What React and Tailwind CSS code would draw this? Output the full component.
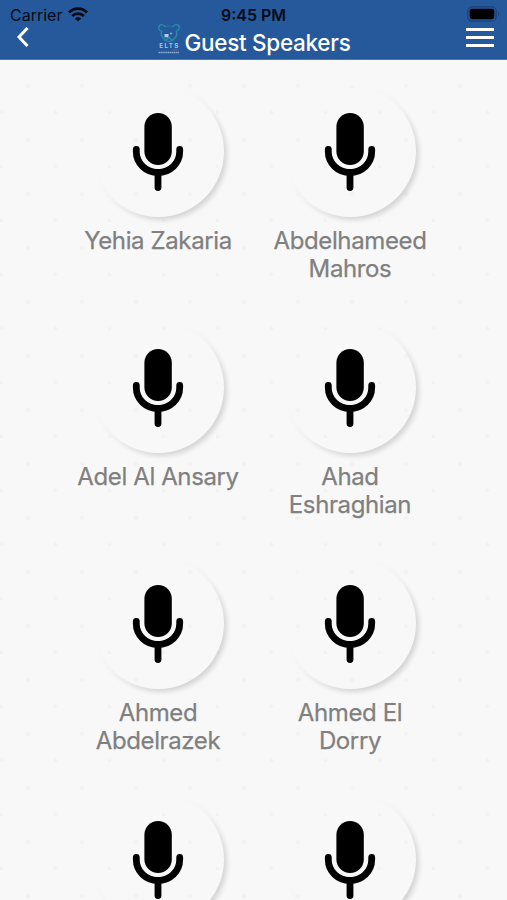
const speakers = [
    { id: 1, lines: ['Yehia Zakaria'] },
    { id: 2, lines: ['Abdelhameed', 'Mahros'] },
    { id: 3, lines: ['Adel Al Ansary'] },
    { id: 4, lines: ['Ahad', 'Eshraghian'] },
    { id: 5, lines: ['Ahmed', 'Abdelrazek'] },
    { id: 6, lines: ['Ahmed El', 'Dorry'] },
    { id: 7, lines: [] },
    { id: 8, lines: [] },
]

const WifiIcon = () => (
    <svg className="ml-[6px] mt-[7px] h-[15px] w-[20px]" viewBox="0 0 20 15" fill="none" stroke="#050b16">
        <path d="M1 5.4C6 .3 14 .3 19 5.4" strokeWidth="2.8" />
        <path d="M4.1 9c3.3-3.3 8.5-3.3 11.8 0" strokeWidth="2.7" />
        <path d="M10 14.6 6.8 11.4c1.8-1.7 4.6-1.7 6.4 0Z" fill="#050b16" stroke="none" />
    </svg>
)

const BatteryIcon = () => (
    <svg className="h-[17px] w-[33px]" viewBox="0 0 33 17" fill="none">
        <rect x=".8" y=".8" width="28.4" height="14.4" rx="4.5" stroke="#1c4277" strokeWidth="1.2" />
        <rect x="2.7" y="2.8" width="24.6" height="10.4" rx="2.4" fill="#000" />
        <path d="M31 5.7c1.5.8 1.5 3.8 0 4.6Z" fill="#1c4277" />
    </svg>
)

const Logo = () => (
    <svg className="h-[32px] w-[24px]" viewBox="0 0 24 32" fill="none">
        <g stroke="#2a9caa" strokeWidth="1.4" opacity=".8">
            <path d="M3.5 8C.4 5.5 1.5 1.6 4.8 1.6c1.6 0 2.7 1 3.2 2.3M20.5 8c3.1-2.5 2-6.4-1.3-6.4-1.6 0-2.7 1-3.2 2.3" />
            <path d="M4.8 7.5c-1.3 3.5.2 7 3 9M19.2 7.5c1.3 3.5-.2 7-3 9" />
            <path d="M7 16.5c2.5 2.5 7.5 2.5 10 0M8.5 17.500l3.500-3 3.500 3" />
            <path d="M8 3.900c2.500-1 5.500-1 8 0" opacity=".5" />
        </g>
        <path d="M7.5 11h4v3.3h-4z" fill="#b7cfea" />
        <circle cx="14" cy="10.5" r="1.1" fill="#78b7cf" />
        <text x="2.3" y="25" fill="#a9c5e6" fontSize="6.2" fontWeight="700" textLength="19" fontFamily="Inter, sans-serif">ELTS</text>
        <path d="M15.5 27h5.5" stroke="#a05476" strokeWidth=".8" />
        <path d="M1.5 29.5h21" stroke="#a9c5e6" strokeWidth="1.4" strokeDasharray="1.5 .4" opacity=".75" />
    </svg>
)

const Microphone = () => (
    <svg className="h-[80px] w-[52px]" viewBox="0 0 52 80" fill="none" stroke="#000">
        <rect x="12.4" y="1" width="27.4" height="52" rx="13.7" fill="#000" stroke="none" />
        <path d="M4.3 37.3v2.5a21.7 20.8 0 0 0 43.4 0v-2.5M26 60.5v15" strokeWidth="6.8" strokeLinecap="round" />
    </svg>
)

const Speaker = ({ lines }) => (
    <div className="flex h-[236px] w-[192px] flex-col items-center">
        <div className="flex h-[131px] w-[131px] shrink-0 items-center justify-center rounded-full shadow-[-5px_-5px_4px_2px_#f8f8f8,3px_3px_5px_rgba(0,0,0,0.14)]">
            <Microphone />
        </div>
        <p className="mt-[10px] text-center text-[24px] leading-[28px] tracking-[-0.38px] text-[#808080] [-webkit-text-stroke:0.25px_#808080]">
            {lines.map(line => (
                <span key={line} className="block whitespace-nowrap">{line}</span>
            ))}
        </p>
    </div>
)

const Header = () => (
    <header className="h-[60px] border-b border-[#4a79b4] bg-[#25599b]">
        <div className="grid h-[22px] grid-cols-[1fr_auto_1fr] items-start text-[#050b16]">
            <div className="flex pl-[10px]">
                <span className="pt-[5px] text-[16px] leading-[20px]">Carrier</span>
                <WifiIcon />
            </div>
            <span className="pt-[5px] text-[16px] font-semibold leading-[20px]">9:45 PM</span>
            <div className="flex justify-end pr-[7px] pt-[6px]">
                <BatteryIcon />
            </div>
        </div>
        <div className="grid h-[37px] grid-cols-[1fr_auto_1fr] items-start">
            <button type="button" aria-label="Back" className="ml-[16px] mt-[4px] w-[14px]">
                <svg className="h-[22px] w-[14px]" viewBox="0 0 14 22" fill="none" stroke="#fff" strokeWidth="3">
                    <path d="M11.5 2 3 11l8.5 9" />
                </svg>
            </button>
            <div className="flex items-start gap-[4px]">
                <div className="pt-[1px]"><Logo /></div>
                <h1 className="pt-[7px] text-[22.5px] font-medium leading-[28px] tracking-[-0.3px] text-white">Guest Speakers</h1>
            </div>
            <button type="button" aria-label="Menu" className="mr-[13px] mt-[6px] flex w-[28px] flex-col gap-[5px] justify-self-end">
                <span className="h-[3px] w-full bg-white" />
                <span className="h-[3px] w-full bg-white" />
                <span className="h-[3px] w-full bg-white" />
            </button>
        </div>
    </header>
)

const App = () => {
    return (
        <div className="h-[900px] w-[507px] overflow-hidden bg-[#f8f8f8] font-['Inter',sans-serif]">
            <Header />
            <main className="h-[840px] overflow-hidden bg-[radial-gradient(circle_at_28px_26px,#f2f2f2_1.5px,transparent_3px),radial-gradient(circle_at_1px_53px,#f2f2f2_1.5px,transparent_3px)] bg-[length:54px_54px] pt-[26px]">
                <div className="ml-[62px] grid w-[384px] grid-cols-2">
                    {speakers.map(speaker => (
                        <Speaker key={speaker.id} lines={speaker.lines} />
                    ))}
                </div>
            </main>
        </div>
    )
}

export default App
